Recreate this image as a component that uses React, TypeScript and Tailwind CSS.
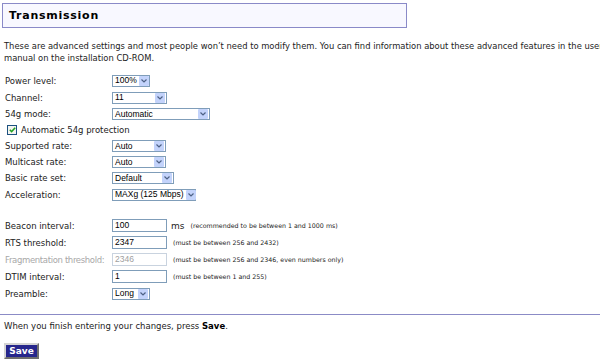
import React from "react";

const Arrow = () => (
  <div className="ml-auto mr-[1px] flex h-[10px] w-[10px] shrink-0 items-center justify-center rounded-[1px] bg-[#c3d3fb]">
    <svg width="6" height="4" viewBox="0 0 6 4">
      <path d="M0.5 0.5 L3 3 L5.5 0.5" fill="none" stroke="#4d6185" strokeWidth="1.2" />
    </svg>
  </div>
);

function Sel({ value, className }: { value: string; className: string }) {
  return (
    <div className={"flex h-[12px] items-center border border-[#7f9db9] bg-white " + className}>
      <span className="pl-[2px] pr-[2px] font-['Liberation_Sans',sans-serif] text-[8.5px] leading-none text-black whitespace-nowrap">
        {value}
      </span>
      <Arrow />
    </div>
  );
}

function Inp({ value, disabled }: { value: string; disabled?: boolean }) {
  return (
    <div
      className={
        "flex h-[13px] w-[55px] items-center border bg-white pl-[2px] font-['Liberation_Sans',sans-serif] text-[8.5px] leading-none " +
        (disabled ? "border-[#c9d3df] text-[#a0a0a0]" : "border-[#7f9db9] text-black")
      }
    >
      {value}
    </div>
  );
}

function Row({
  label,
  children,
  h,
  gray,
}: {
  label: string;
  children: React.ReactNode;
  h: string;
  gray?: boolean;
}) {
  return (
    <div className={"flex items-center " + h}>
      <div
        className={
          "w-[112px] shrink-0 overflow-hidden pl-[5px] whitespace-nowrap " +
          (gray ? "tracking-[-0.35px] text-[#a8a8a8]" : "")
        }
      >
        {label}
      </div>
      {children}
    </div>
  );
}

const Note = ({ children }: { children: React.ReactNode }) => (
  <span className="ml-[6px] text-[6.3px] whitespace-nowrap text-[#222]">{children}</span>
);

export default function App() {
  return (
    <div className="h-[360px] w-[600px] overflow-hidden bg-white font-['DejaVu_Sans',sans-serif] text-[8.5px] leading-[12px] text-[#222]">
      <div className="ml-[2px] mt-[3px] flex h-[25px] w-[405px] items-center border border-[#8a8ac8] bg-[#f8f8ff] pl-[6px]">
        <span className="text-[11px] font-bold tracking-[0.75px] text-black">Transmission</span>
      </div>

      <div className="mt-[12px] w-[620px] pl-[4px] text-[8.4px]">
        <div className="whitespace-nowrap">
          These are advanced settings and most people won’t need to modify them. You can find information about these advanced features in the user
        </div>
        <div className="whitespace-nowrap">manual on the installation CD-ROM.</div>
      </div>

      <div className="mt-[8px] flex flex-col">
        <Row label="Power level:" h="h-[17px]">
          <Sel value="100%" className="w-[38px]" />
        </Row>
        <Row label="Channel:" h="h-[17px]">
          <Sel value="11" className="w-[55px]" />
        </Row>
        <Row label="54g mode:" h="h-[16px]">
          <Sel value="Automatic" className="w-[98px]" />
        </Row>
        <div className="flex h-[16px] items-center pl-[7px]">
          <div className="flex h-[10px] w-[10px] items-center justify-center border border-[#1c5180] bg-[#f4f4f0]">
            <svg width="7" height="6" viewBox="0 0 7 6">
              <path d="M0.8 2.8 L2.6 4.6 L6.2 0.8" fill="none" stroke="#21a121" strokeWidth="1.5" />
            </svg>
          </div>
          <span className="ml-[4px] whitespace-nowrap">Automatic 54g protection</span>
        </div>
        <Row label="Supported rate:" h="h-[16px]">
          <Sel value="Auto" className="w-[54px]" />
        </Row>
        <Row label="Multicast rate:" h="h-[16px]">
          <Sel value="Auto" className="w-[54px]" />
        </Row>
        <Row label="Basic rate set:" h="h-[16px]">
          <Sel value="Default" className="w-[62px]" />
        </Row>
        <Row label="Acceleration:" h="h-[17px]">
          <Sel value="MAXg (125 Mbps)" className="w-[84px]" />
        </Row>

        <div className="h-[14px]" />

        <Row label="Beacon interval:" h="h-[17px]">
          <Inp value="100" />
          <span className="ml-[4px] text-[9px]">ms</span>
          <Note>(recommended to be between 1 and 1000 ms)</Note>
        </Row>
        <Row label="RTS threshold:" h="h-[17px]">
          <Inp value="2347" />
          <Note>(must be between 256 and 2432)</Note>
        </Row>
        <Row label="Fragmentation threshold:" h="h-[17px]" gray>
          <Inp value="2346" disabled />
          <Note>(must be between 256 and 2346, even numbers only)</Note>
        </Row>
        <Row label="DTIM interval:" h="h-[17px]">
          <Inp value="1" />
          <Note>(must be between 1 and 255)</Note>
        </Row>
        <Row label="Preamble:" h="h-[17px]">
          <Sel value="Long" className="w-[38px]" />
        </Row>
      </div>

      <div className="mt-[12px] h-[1px] w-full bg-[#8b8bc6]" />

      <div className="mt-[5px] pl-[4px] whitespace-nowrap">
        When you finish entering your changes, press <b className="text-black">Save</b>.
      </div>

      <div className="ml-[4px] mt-[11px] flex h-[16px] w-[35px] items-center justify-center border-2 border-t-[#d4d4d4] border-l-[#d4d4d4] border-b-[#6e6e6e] border-r-[#6e6e6e] bg-[#26268c] text-[9px] font-bold text-white">
        Save
      </div>
    </div>
  );
}
